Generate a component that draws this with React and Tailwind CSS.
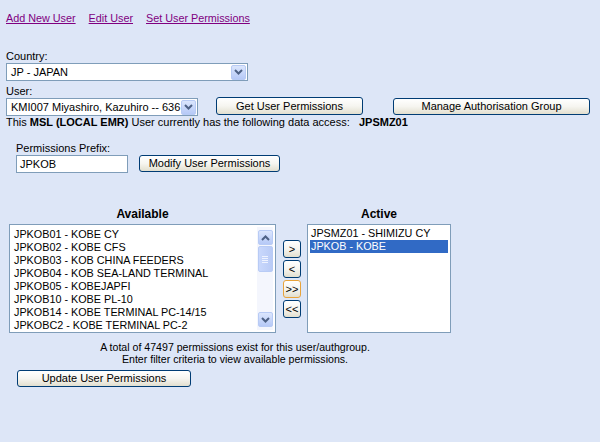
import React from "react";

const available = [
  "JPKOB01 - KOBE CY",
  "JPKOB02 - KOBE CFS",
  "JPKOB03 - KOB CHINA FEEDERS",
  "JPKOB04 - KOB SEA-LAND TERMINAL",
  "JPKOB05 - KOBEJAPFI",
  "JPKOB10 - KOBE PL-10",
  "JPKOB14 - KOBE TERMINAL PC-14/15",
  "JPKOBC2 - KOBE TERMINAL PC-2",
];

function Chevron({ up }) {
  return (
    <svg width="9" height="6" viewBox="0 0 9 6">
      <path
        d={up ? "M1 5 L4.5 1.5 L8 5" : "M1 1 L4.5 4.5 L8 1"}
        fill="none"
        stroke="#4d6185"
        strokeWidth="2"
      />
    </svg>
  );
}

function ArrowBox({ up }) {
  return (
    <div className="w-[15px] h-[15px] rounded-[2px] border border-[#b8cbf5] bg-gradient-to-b from-[#dbe6fd] to-[#b6c9f7] flex items-center justify-center">
      <Chevron up={up} />
    </div>
  );
}

function Select({ width, value }) {
  return (
    <div
      className={`${width} h-[18px] bg-white border border-[#7f9db9] flex items-center justify-between pl-[4px] pr-[1px]`}
    >
      <span className="text-[11px] leading-none whitespace-nowrap">{value}</span>
      <ArrowBox />
    </div>
  );
}

function XpButton({ className, children, orange }) {
  return (
    <div
      className={`${className} border ${
        orange ? "border-[#e8a33a]" : "border-[#003c74]"
      } rounded-[3px] bg-gradient-to-b from-white via-[#f6f5f0] to-[#e2dfcf] flex items-center justify-center text-[11px] leading-none whitespace-nowrap`}
    >
      {children}
    </div>
  );
}

export default function App() {
  return (
    <div className="w-[600px] min-h-[442px] bg-[#dde6f7] text-black font-['Liberation_Sans',Arial,sans-serif] text-[11px] leading-none pl-[6px] pt-[13px]">
      <div className="flex gap-[13px] text-[#800080] underline text-[10.8px] h-[12px]">
        <span>Add New User</span>
        <span>Edit User</span>
        <span>Set User Permissions</span>
      </div>

      <div className="mt-[26px] h-[12px]">Country:</div>
      <Select width="w-[242px]" value="JP - JAPAN" />

      <div className="mt-[5px] h-[11px]">User:</div>
      <div className="flex items-start h-[19px]">
        <div className="mt-[1px]">
          <Select width="w-[192px]" value="KMI007 Miyashiro, Kazuhiro -- 636" />
        </div>
        <XpButton className="ml-[18px] w-[147px] h-[18px]">
          Get User Permissions
        </XpButton>
        <XpButton className="ml-[30px] mt-[1px] w-[197px] h-[17px]">
          Manage Authorisation Group
        </XpButton>
      </div>
      <div className="h-[13px] flex items-center whitespace-nowrap">
        <span>This&nbsp;</span>
        <span className="font-bold">MSL (LOCAL EMR)</span>
        <span>&nbsp;User currently has the following data access:&nbsp;&nbsp;&nbsp;</span>
        <span className="font-bold">JPSMZ01</span>
      </div>

      <div className="pl-[10px]">
        <div className="mt-[14px] h-[12px]">Permissions Prefix:</div>
        <div className="flex items-start">
          <div className="w-[112px] h-[18px] bg-white border border-[#7f9db9] pl-[3px] flex items-center">
            JPKOB
          </div>
          <XpButton className="ml-[11px] w-[141px] h-[17px]">
            Modify User Permissions
          </XpButton>
        </div>
      </div>

      <div className="mt-[35px] flex pl-[3px]">
        <div className="flex flex-col items-center">
          <div className="font-bold text-[12px] h-[16px]">Available</div>
          <div className="w-[267px] h-[109px] border border-[#7f9db9] bg-white p-[2px] flex">
            <div className="flex-1 pl-[2px] pt-[1px] text-[10.8px]">
              {available.map((t) => (
                <div key={t} className="h-[13px] leading-[13px] whitespace-nowrap">
                  {t}
                </div>
              ))}
            </div>
            <div className="w-[16px] flex flex-col items-center justify-between bg-[#f4f6fd] py-[3px]">
              <ArrowBox up />
              <div className="flex-1 w-full flex flex-col items-center pt-[1px]">
                <div className="w-[15px] h-[26px] rounded-[2px] border border-[#b8cbf5] bg-gradient-to-r from-[#c9d8fc] to-[#b9cbf6] flex flex-col items-center justify-center gap-[1px]">
                  <div className="w-[6px] h-px bg-[#eef3ff]" />
                  <div className="w-[6px] h-px bg-[#eef3ff]" />
                  <div className="w-[6px] h-px bg-[#eef3ff]" />
                  <div className="w-[6px] h-px bg-[#eef3ff]" />
                </div>
              </div>
              <ArrowBox />
            </div>
          </div>
        </div>

        <div className="ml-[7px] mt-[32px] flex flex-col gap-[2px]">
          <XpButton className="w-[18px] h-[18px]">&gt;</XpButton>
          <XpButton className="w-[18px] h-[18px]">&lt;</XpButton>
          <XpButton className="w-[18px] h-[18px]" orange>
            &gt;&gt;
          </XpButton>
          <XpButton className="w-[18px] h-[18px]">&lt;&lt;</XpButton>
        </div>

        <div className="ml-[6px] flex flex-col items-center">
          <div className="font-bold text-[12px] h-[16px]">Active</div>
          <div className="w-[144px] h-[109px] border border-[#7f9db9] bg-white p-[2px] text-[10.8px]">
            <div className="h-[13px] leading-[13px] pl-[1px]">JPSMZ01 - SHIMIZU CY</div>
            <div className="h-[13px] leading-[13px] pl-[1px] bg-[#316ac5] text-white">
              JPKOB - KOBE
            </div>
          </div>
        </div>
      </div>

      <div className="w-[458px] mt-[8px] text-center text-[10.6px] leading-[12px]">
        <div>A total of 47497 permissions exist for this user/authgroup.</div>
        <div>Enter filter criteria to view available permissions.</div>
      </div>

      <XpButton className="ml-[11px] mt-[5px] w-[174px] h-[17px]">
        Update User Permissions
      </XpButton>
    </div>
  );
}
